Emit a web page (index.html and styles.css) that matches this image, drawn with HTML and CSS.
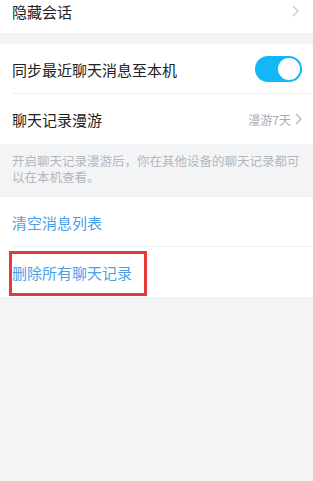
FILE: index.html
```html
<!DOCTYPE html>
<html>
<head>
    <meta charset="utf-8">
    <title>聊天记录</title>
    <link rel="stylesheet" href="styles.css">
</head>
<body>
    <div class="group">
        <div class="row row-top">
            <span class="label">隐藏会话</span>
            <span class="arrow"><svg width="7" height="12" viewBox="0 0 7 12"><path d="M1 1l5 5-5 5" fill="none" stroke="#c8c8cc" stroke-width="1.3"/></svg></span>
        </div>
    </div>

    <div class="group">
        <div class="row line">
            <span class="label">同步最近聊天消息至本机</span>
            <span class="switch on"><span class="knob"></span></span>
        </div>
        <div class="row">
            <span class="label">聊天记录漫游</span>
            <span class="value">漫游7天<svg width="7" height="12" viewBox="0 0 7 12"><path d="M1 1l5 5-5 5" fill="none" stroke="#b4b4b8" stroke-width="1.3"/></svg></span>
        </div>
    </div>

    <div class="note">开启聊天记录漫游后，你在其他设备的聊天记录都可以在本机查看。</div>

    <div class="group">
        <div class="row line">
            <span class="label blue">清空消息列表</span>
        </div>
        <div class="row">
            <span class="label blue marked">删除所有聊天记录</span>
        </div>
    </div>
</body>
</html>
```

FILE: styles.css
```css
body {
    margin: 0;
    background-color: #f3f4f6;
    font-family: "Noto Sans CJK SC", "Noto Sans", sans-serif;
    color: #222222;
}

.group {
    background-color: #ffffff;
    margin-bottom: 11px;
}

.group:first-child {
    margin-top: -11px;
}

.row {
    display: flex;
    align-items: center;
    justify-content: space-between;
    height: 50px;
    padding: 0 11px 0 12px;
    position: relative;
}

.row-top {
    height: 44px;
}

.line::after {
    content: "";
    position: absolute;
    left: 12px;
    right: 0;
    bottom: 0;
    height: 1px;
    background-color: #eeeff1;
}

.label {
    font-size: 15px;
}

.blue {
    color: #4ba0e6;
}

.marked {
    position: relative;
}

.marked::before {
    content: "";
    position: absolute;
    left: -3px;
    top: -11px;
    width: 132px;
    height: 39px;
    border: 3px solid #e53a3a;
}

.arrow {
    display: flex;
    padding-right: 3px;
}

.value {
    display: flex;
    align-items: center;
    gap: 4px;
    font-size: 12px;
    color: #a8abb0;
}

.switch {
    width: 47px;
    height: 26px;
    border-radius: 13px;
    background-color: #12b7f5;
    position: relative;
}

.knob {
    position: absolute;
    right: 2px;
    top: 2px;
    width: 22px;
    height: 22px;
    border-radius: 50%;
    background-color: #ffffff;
}

.note {
    font-size: 12.5px;
    line-height: 16px;
    color: #b4b7bc;
    padding: 9px 12px 12px 12px;
    margin-top: -11px;
    margin-bottom: 0;
}
```
